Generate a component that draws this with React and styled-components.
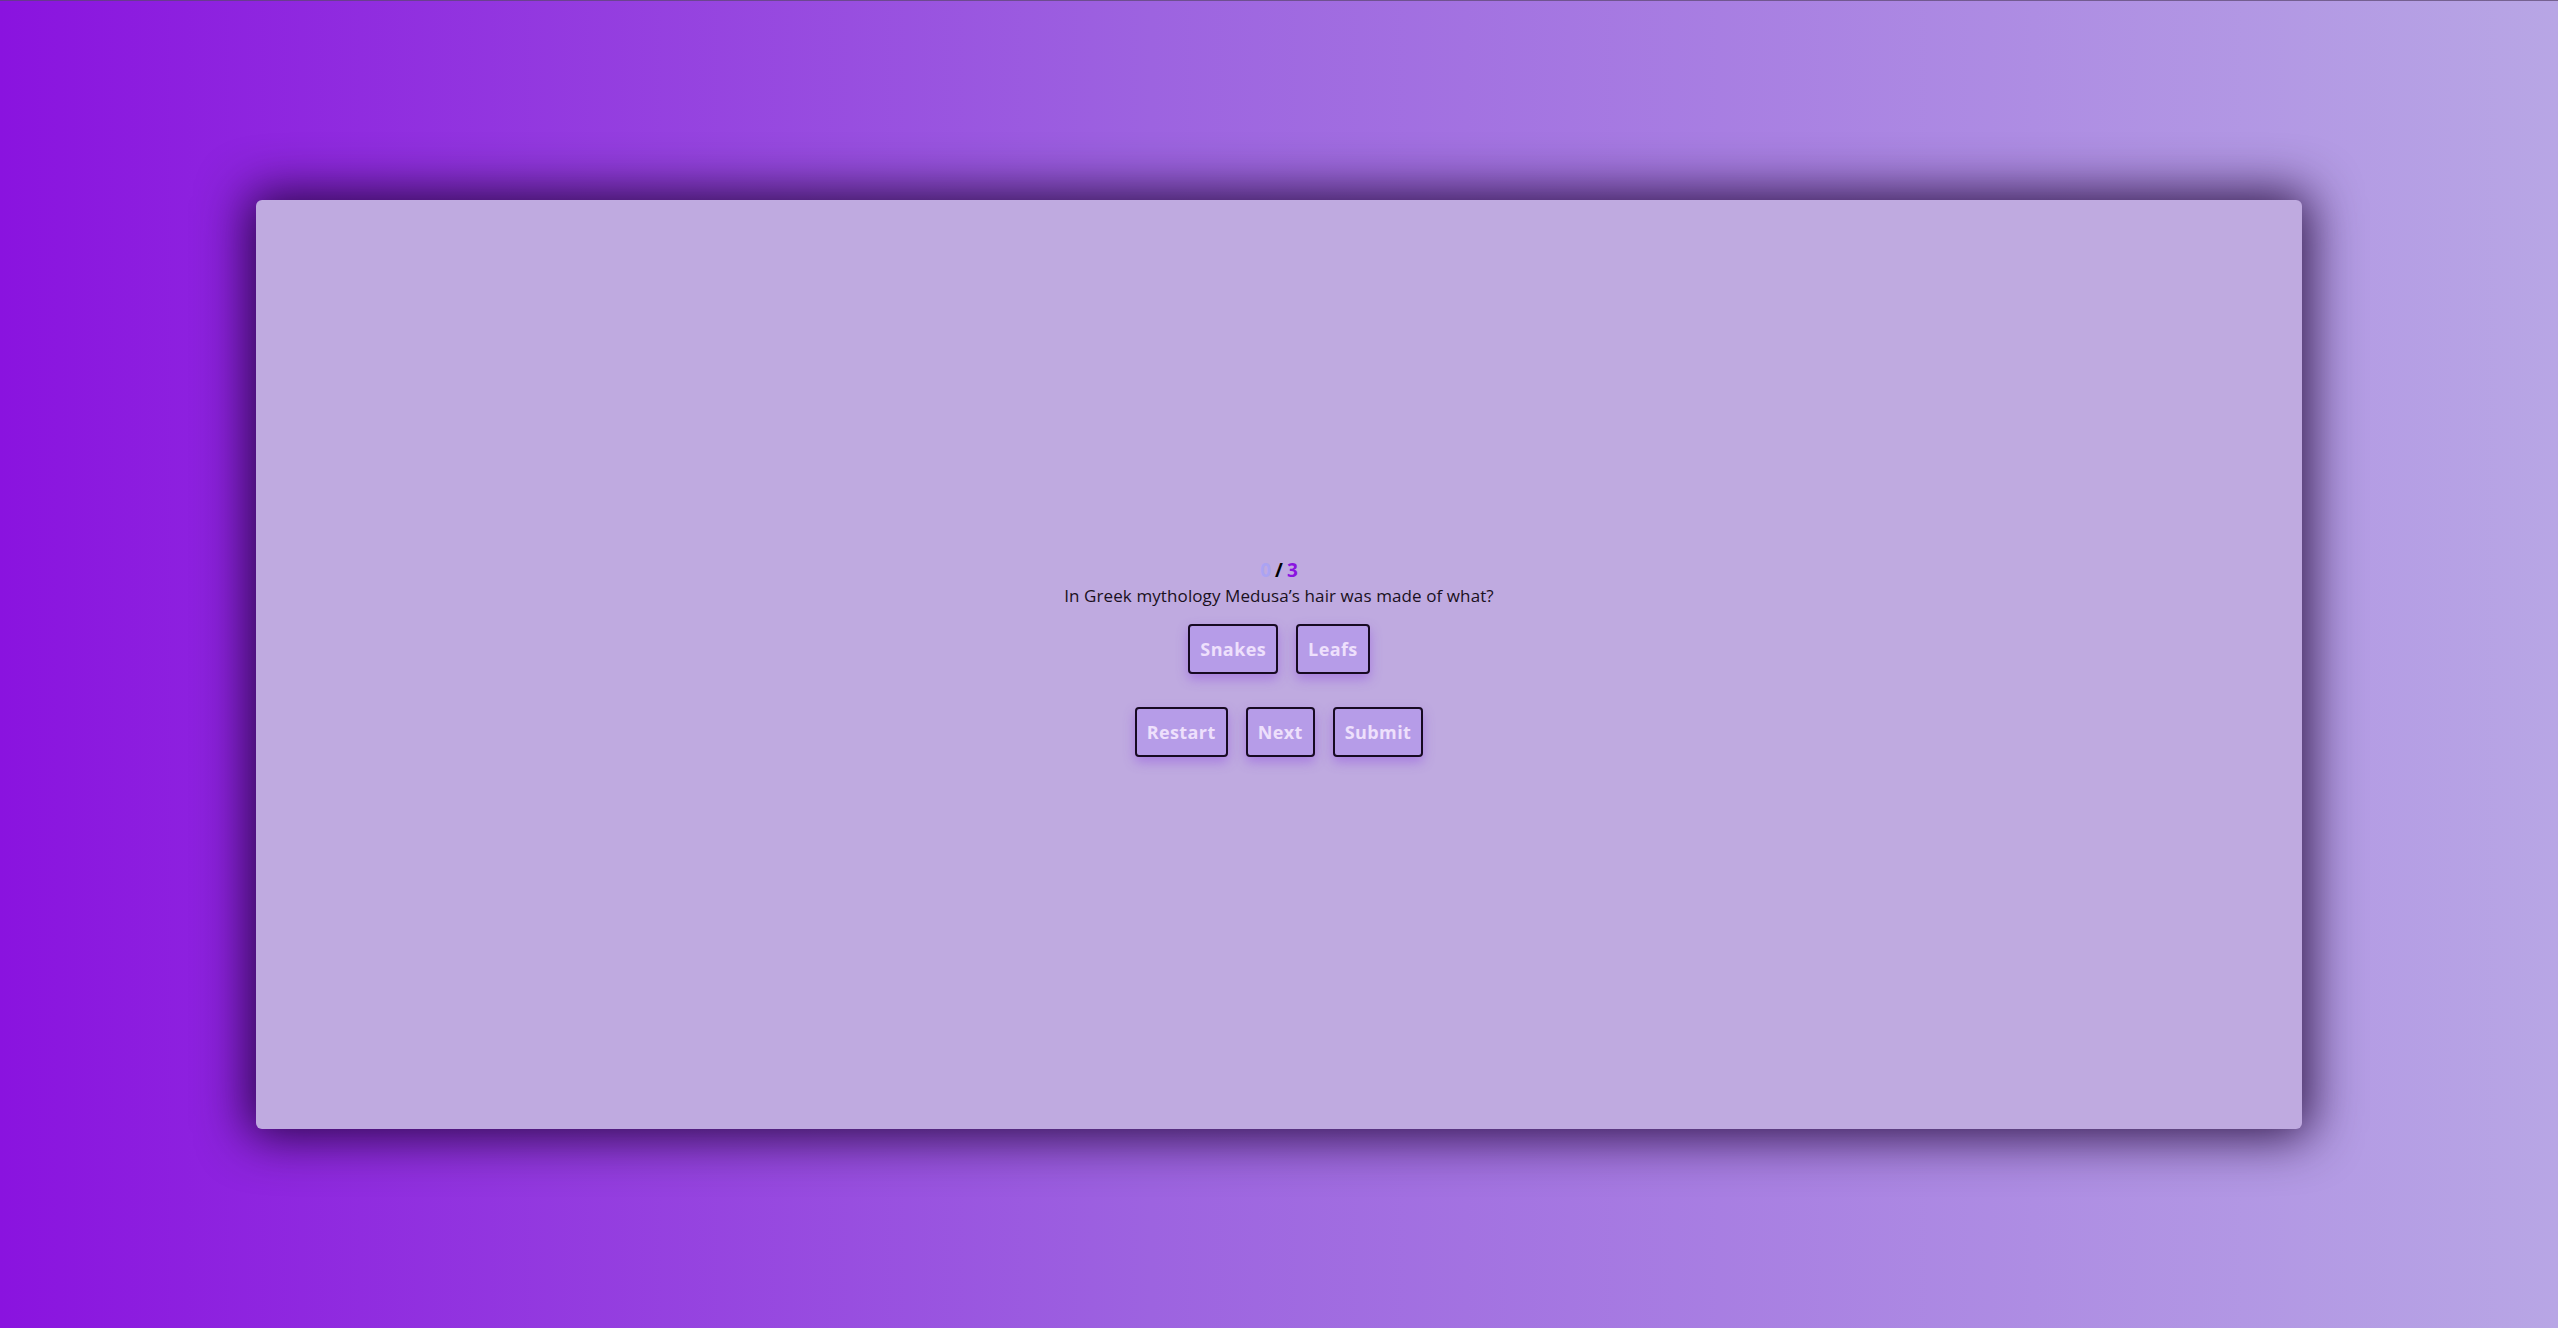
import React from 'react';
import styled, { createGlobalStyle } from 'styled-components';

const GlobalStyle = createGlobalStyle`
  * {
    box-sizing: border-box;
  }
  body {
    margin: 0;
    font-family: 'Open Sans', 'Liberation Sans', sans-serif;
    background: linear-gradient(to right, #8a13df 0%, #9d63e0 45%, #b8a6e5 100%);
    min-height: 100vh;
  }
`;

const answers = ['Snakes', 'Leafs'];
const controls = ['Restart', 'Next', 'Submit'];

const App = () => {
  return (
    <>
      <GlobalStyle />
      <Page>
        <Card>
          <Counter>
            <Score>0</Score>
            <Slash>/</Slash>
            <Total>3</Total>
          </Counter>
          <Question>In Greek mythology Medusa’s hair was made of what?</Question>
          <ButtonRow>
            {answers.map((a) => (
              <QuizButton key={a}>{a}</QuizButton>
            ))}
          </ButtonRow>
          <ButtonRow $spaced>
            {controls.map((c) => (
              <QuizButton key={c}>{c}</QuizButton>
            ))}
          </ButtonRow>
        </Card>
      </Page>
    </>
  );
};

// Styles
const Page = styled.div`
  height: 100vh;
  display: flex;
  align-items: center;
  justify-content: center;
  border-top: 1px solid rgba(90, 70, 110, 0.7);
`;

const Card = styled.div`
  width: 80vw;
  height: 70vh;
  background: #bfaae0;
  border-radius: 6px;
  box-shadow: 0 0 50px 8px rgba(25, 0, 45, 0.85);
  display: flex;
  flex-direction: column;
  align-items: center;
  justify-content: center;
  padding-bottom: 14px;
`;

const Counter = styled.div`
  display: flex;
  align-items: baseline;
  gap: 4px;
  font-size: 19px;
  font-weight: 700;
  line-height: 24px;
`;

const Score = styled.span`
  color: #aba3f3;
`;

const Slash = styled.span`
  color: #000;
`;

const Total = styled.span`
  color: #8a14e0;
`;

const Question = styled.p`
  margin: 2px 0 16px;
  font-size: 17px;
  letter-spacing: 0.1px;
  line-height: 24px;
  color: #1a1020;
`;

const ButtonRow = styled.div`
  display: flex;
  gap: 18px;
  margin-top: ${(props) => (props.$spaced ? '33px' : '0')};
`;

const QuizButton = styled.button`
  height: 50px;
  padding: 0 10px;
  font-family: 'Open Sans', 'Liberation Sans', sans-serif;
  font-size: 18px;
  font-weight: 700;
  letter-spacing: 0.4px;
  color: #eee0fc;
  background: #b69ce8;
  border: 2px solid #170a22;
  border-radius: 4px;
  box-shadow: 0 5px 12px rgba(140, 70, 225, 0.45);
  cursor: pointer;
`;

export default App;
